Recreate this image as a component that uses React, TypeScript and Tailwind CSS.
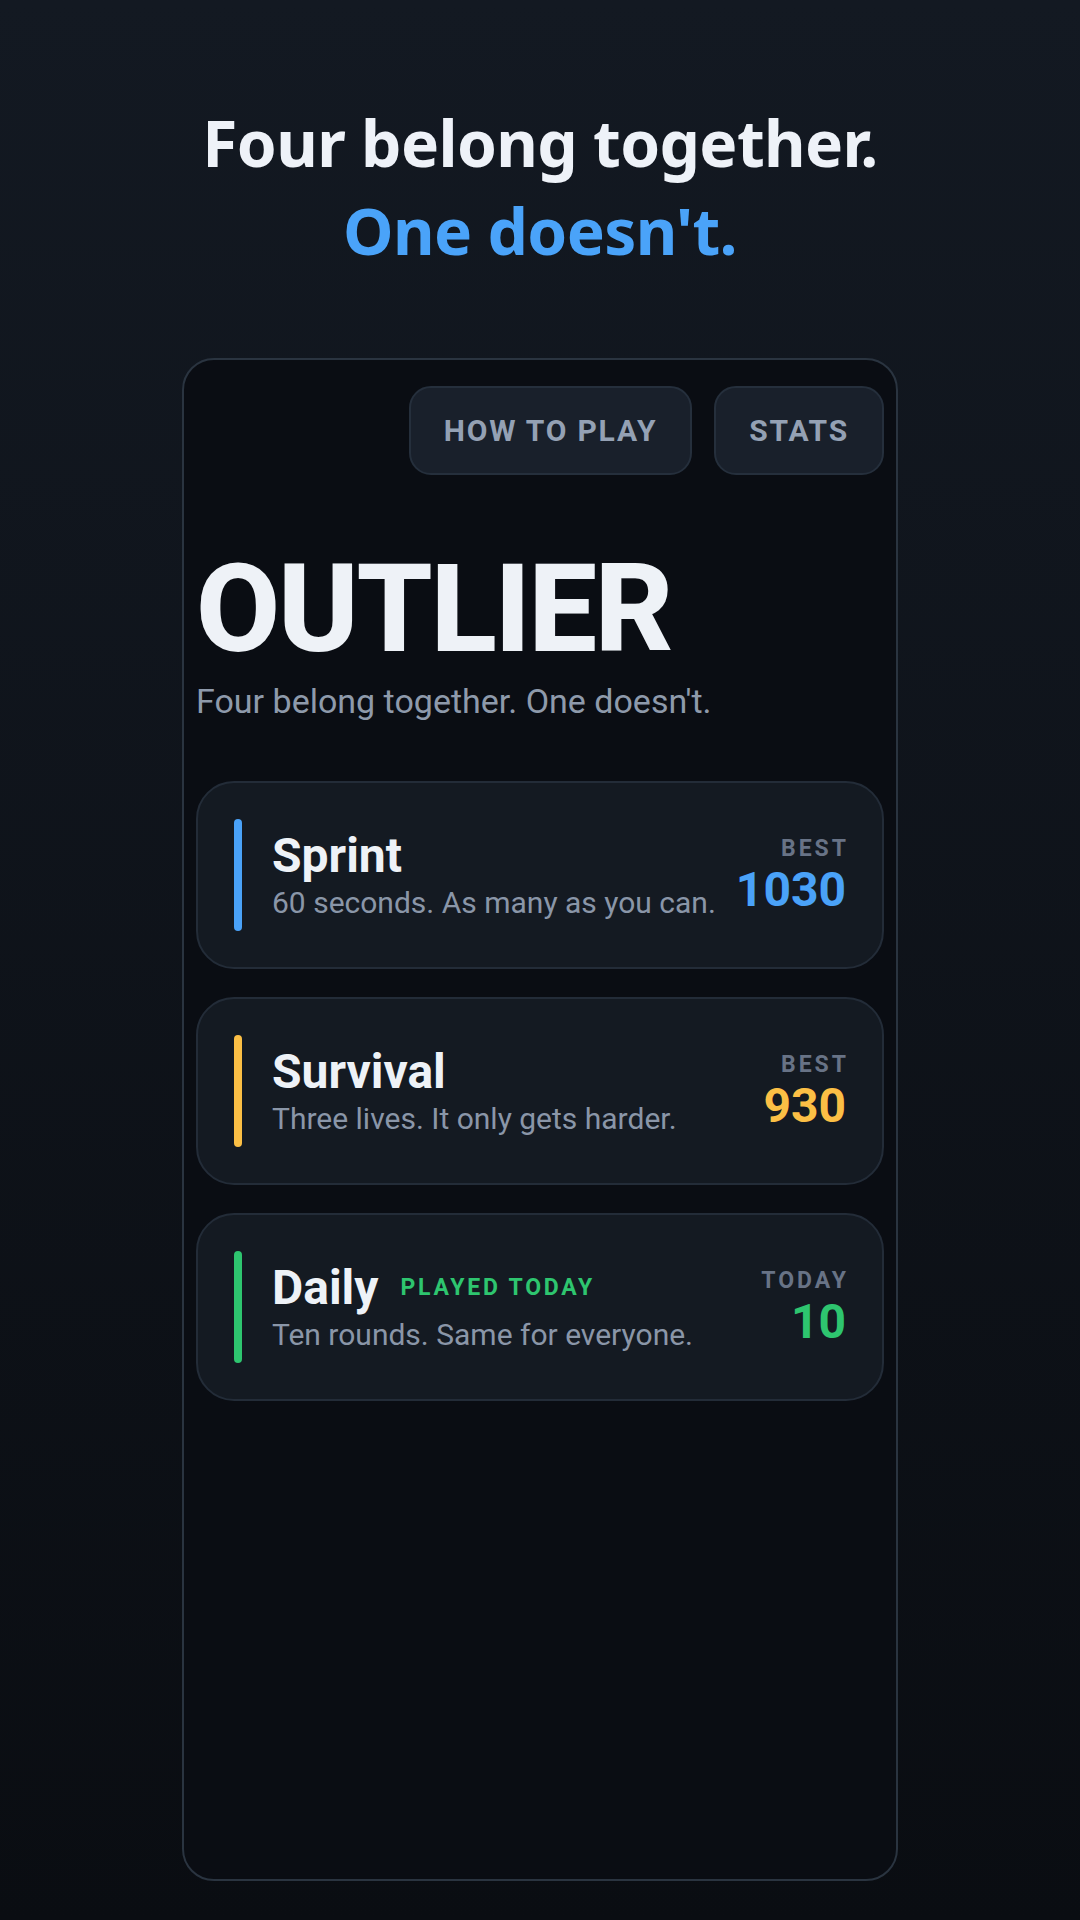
const modes = [
  {
    name: 'Sprint',
    desc: '60 seconds. As many as you can.',
    label: 'BEST',
    score: '1030',
    bar: 'bg-[#4aa2f8]',
    scoreColor: 'text-[#4aa2f8]',
    tag: null as string | null,
  },
  {
    name: 'Survival',
    desc: 'Three lives. It only gets harder.',
    label: 'BEST',
    score: '930',
    bar: 'bg-[#fbbf45]',
    scoreColor: 'text-[#fbbf45]',
    tag: null as string | null,
  },
  {
    name: 'Daily',
    desc: 'Ten rounds. Same for everyone.',
    label: 'TODAY',
    score: '10',
    bar: 'bg-[#2ec56f]',
    scoreColor: 'text-[#2ec56f]',
    tag: 'PLAYED TODAY',
  },
]

function ModeCard({ mode }: { mode: (typeof modes)[number] }) {
  return (
    <div className="flex h-[188px] items-center rounded-[38px] border-2 border-[#232c38] bg-[#141a22] px-[36px]">
      <div className={`h-[112px] w-2 shrink-0 rounded-full ${mode.bar}`} />
      <div className="ml-[30px] mt-[2px] flex-1">
        <div className="flex items-center gap-[22px]">
          <span className="text-[48px] font-bold leading-[1.15] text-[#eef2f7]">{mode.name}</span>
          {mode.tag && (
            <span className="text-[23px] font-bold leading-[1.3] tracking-[0.12em] text-[#2ec56f]">
              {mode.tag}
            </span>
          )}
        </div>
        <p className="text-[30px] leading-[1.35] text-[#8a96a8]">{mode.desc}</p>
      </div>
      <div className="mr-[-3px] text-right">
        <div className="text-[23px] font-bold leading-[1.3] tracking-[0.13em] text-[#687386]">{mode.label}</div>
        <div className={`mr-[3px] text-[48px] font-bold leading-[1.1] ${mode.scoreColor}`}>{mode.score}</div>
      </div>
    </div>
  )
}

export default function App() {
  return (
    <div className="flex h-[1920px] w-full flex-col items-center bg-gradient-to-b from-[#131922] to-[#0a0d12] font-['Roboto',sans-serif]">
      <h1 className="pt-[99px] text-center font-['Noto_Sans',sans-serif] text-[64px] font-bold leading-[88px] tracking-[-0.01em]">
        <span className="block text-[#eef2f8]">Four belong together.</span>
        <span className="block text-[#4aa3f9]">One doesn't.</span>
      </h1>

      <div className="mt-[83px] flex h-[1523px] w-[716px] flex-col rounded-[32px] border-2 border-[#2a3440] bg-[#0a0d13] p-3">
        <div className="mt-[14px] flex justify-end gap-[22px]">
          <button className="h-[89px] rounded-[22px] border-2 border-[#252f3c] bg-[#19202b] px-[33px] text-[30px] font-bold tracking-[0.06em] text-[#94a1b4]">
            HOW TO PLAY
          </button>
          <button className="h-[89px] rounded-[22px] border-2 border-[#252f3c] bg-[#19202b] px-[33px] text-[30px] font-bold tracking-[0.06em] text-[#94a1b4]">
            STATS
          </button>
        </div>

        <h2 className="mt-[74px] text-[122px] font-extrabold leading-none tracking-[-0.018em] text-[#eef2f7]">OUTLIER</h2>
        <p className="mt-[5px] text-[34px] leading-[1.5] text-[#8e9aab]">Four belong together. One doesn't.</p>

        <div className="mt-[54px] flex flex-col gap-[28px]">
          {modes.map((m) => (
            <ModeCard key={m.name} mode={m} />
          ))}
        </div>
      </div>
    </div>
  )
}
